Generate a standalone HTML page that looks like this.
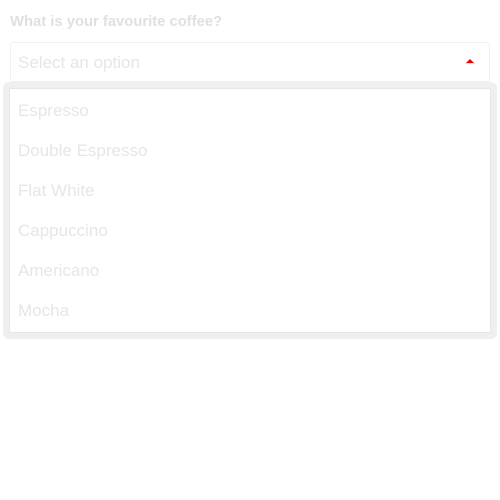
<html><head><style>
body{margin:0;background:#fff;font-family:"Liberation Sans",sans-serif;}
.lab{position:absolute;left:10px;top:14px;font-size:14.8px;font-weight:bold;color:#e0e0e0;}
.sel{position:absolute;left:10px;top:42px;width:480px;height:40px;border:1px solid #f0f0f0;border-radius:3px;box-sizing:border-box;}
.sel span{position:absolute;left:7px;top:10px;font-size:17px;color:#e6e6e6;}
.tri{position:absolute;left:455px;top:16px;width:0;height:0;border-left:4px solid transparent;border-right:4px solid transparent;border-bottom:4px solid #e00;}
.base{position:absolute;left:454px;top:20px;width:10px;height:1px;background:#ff0;}
.dd{position:absolute;left:3px;top:82px;width:494px;height:257px;background:#efefef;border-radius:6px;}
.in{position:absolute;left:6px;top:6px;width:482px;height:245px;background:#fff;border:1px solid #e6e6e6;box-sizing:border-box;border-radius:2px;}
.it{position:absolute;left:8px;font-size:17px;color:#e6e6e6;}
</style></head><body>
<div class="lab">What is your favourite coffee?</div>
<div class="sel"><span>Select an option</span><div class="tri"></div><div class="base"></div></div>
<div class="dd"><div class="in">
<div class="it" style="top:12px">Espresso</div>
<div class="it" style="top:52px">Double Espresso</div>
<div class="it" style="top:92px">Flat White</div>
<div class="it" style="top:132px">Cappuccino</div>
<div class="it" style="top:172px">Americano</div>
<div class="it" style="top:212px">Mocha</div>
</div></div>
</body></html>
